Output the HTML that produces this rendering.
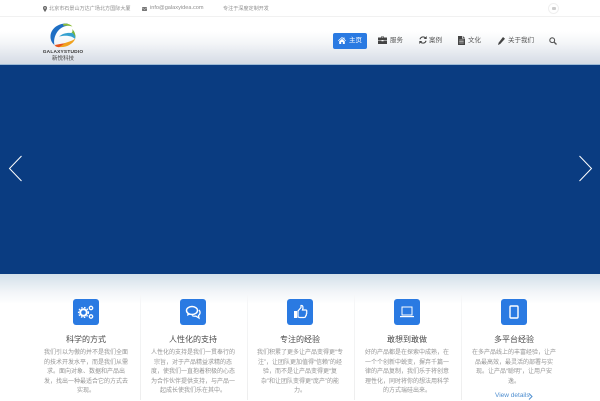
<!DOCTYPE html>
<html lang="zh-CN">
<head>
<meta charset="utf-8">
<title>Galaxy Studio</title>
<style>
*{box-sizing:border-box}
html,body{margin:0;padding:0}
body{width:600px;height:400px;overflow:hidden;background:#fff;position:relative;font-family:"Liberation Sans","Noto Sans CJK SC",sans-serif;color:#555}
.abs{position:absolute}
.top{left:0;top:0;width:600px;height:17px;background:#fff;border-bottom:1px solid #f1f1f1}
.tt{position:absolute;top:5px;font-size:5.100px;line-height:9px;color:#8f8f8f;white-space:nowrap}
.head{left:0;top:17px;width:600px;height:47px;background:linear-gradient(#fff 0,#fff 30%,#f4f6f8 55%,#d5dbe5 100%)}
.banner{left:0;top:64px;width:600px;height:210px;background:#0a3c81;border-top:1px solid #9dbad6}
.under{left:0;top:274px;width:600px;height:30px;background:linear-gradient(#d3e0ea,#f2f5f8 60%,#fff)}
.nav{position:absolute;top:35.500px;font-size:6.500px;line-height:10px;color:#555;white-space:nowrap}
.home{left:333px;top:33px;width:34px;height:16px;background:#2a7ae2;border-radius:2px}
.ic{top:299px;width:26px;height:26px;background:#2a7ae2;border-radius:3px;position:absolute}
.div{position:absolute;top:295px;width:1px;height:105px;background:linear-gradient(#f6f7f8,#eeeeee)}
.h{position:absolute;top:333.500px;width:107px;text-align:center;font-size:8px;line-height:12px;color:#4a4a4a;white-space:nowrap}
.p{position:absolute;top:349px;width:107px;text-align:center;font-size:6px;line-height:9.500px;color:#959595;white-space:nowrap}
</style>
</head>
<body>
<div class="abs top"></div>
<svg class="abs" style="left:43px;top:6px" width="4" height="6" viewBox="0 0 4 6"><path d="M2 0a2 2 0 0 0-2 2c0 1.400 2 4 2 4s2-2.600 2-4a2 2 0 0 0-2-2z" fill="#666"/><circle cx="2" cy="2" r=".7" fill="#fff"/></svg>
<div class="tt" style="left:49px">北京市石景山万达广场北方国际大厦</div>
<svg class="abs" style="left:142px;top:7px" width="5" height="4" viewBox="0 0 5 4"><rect width="5" height="4" rx=".6" fill="#777"/><path d="M0 .8l2.500 1.600L5 .8" stroke="#fff" stroke-width=".4" fill="none"/></svg>
<div class="tt" style="left:150px;font-size:5.600px;top:4px">info@galaxyidea.com</div>
<div class="tt" style="left:223px">专注于深度定制开发</div>
<div class="abs" style="left:548px;top:3px;width:11px;height:11px;border-radius:50%;border:1px solid #efefef;background:#fff"></div>
<div class="abs" style="left:552px;top:7px;width:4px;height:3px;background:#ccc;border-radius:1px"></div>

<div class="abs head"></div>
<svg class="abs" style="left:50px;top:23px" width="26" height="25" viewBox="0 0 26 25">
<path d="M17 .5C9 0 1 5 .5 13c-.2 4 1.500 7 4 9C3 16 6 8 12 4.500 15 3 17 2.500 20 2.500 19 1.500 18 1 17 .5z" fill="#1f6fc4"/>
<path d="M13 1c4-1 7 0 9.500 2.500-3-.8-6-1-9-.8z" fill="#8fbf3a"/>
<path d="M9 13.500C13 10 19 9 24 10.500c1.500 1 1.800 3 1 5.500-3-3.500-9.500-4-16-2.500z" fill="#35a0cf"/>
<path d="M22 6c2.500 2 3.800 5.500 3.300 9-.5-2.500-1.500-4.500-4-5.500 1.500-.5 1.500-2 .7-3.500z" fill="#78b53c"/>
<path d="M6 23.500c7 2 16-.5 19.500-8-2 1.500-4.500 2.500-7.500 3.500-4 1.500-8 2.500-12 4.500z" fill="#f0a21e"/>
<path d="M4.500 22.500c1 1 2.500 1.500 4.500 1.800l6-4c-4 .5-7.500 1-10.500 2.200z" fill="#e5531e"/>
</svg>
<div class="abs" style="left:40px;top:50px;width:46px;text-align:center;font-size:4.800px;line-height:5px;font-weight:bold;color:#333;letter-spacing:.2px;white-space:nowrap">GALAXYSTUDIO</div>
<div class="abs" style="left:40px;top:55px;width:46px;text-align:center;font-size:5.500px;line-height:8px;color:#444;white-space:nowrap">新悦科技</div>

<div class="abs home"></div>
<svg class="abs" style="left:338px;top:37px" width="8" height="7" viewBox="0 0 8 7"><path d="M4 0L0 3.500l.5.500L4 1l3.500 3 .5-.5L6.500 2.200V.5h-1v.9zM1.200 4.200V7h2V5h1.600v2h2V4.200L4 1.800z" fill="#fff"/></svg>
<div class="nav" style="left:349px;color:#fff">主页</div>
<svg class="abs" style="left:378px;top:36px" width="9" height="8" viewBox="0 0 9 8"><path d="M3 1.500V.5h3v1h3v2.500H0V1.500zM3.700 1.500h1.600V1H3.700zM0 4.500h3.500v.7h2v-.7H9V8H0z" fill="#444"/></svg>
<div class="nav" style="left:390px">服务</div>
<svg class="abs" style="left:419px;top:36px" width="8" height="8" viewBox="0 0 8 8"><path d="M1 3.300A3.100 3.100 0 0 1 6.300 1.900M7 4.700A3.100 3.100 0 0 1 1.700 6.100" stroke="#444" stroke-width="1.100" fill="none"/><path d="M7.700 0v3h-3zM.3 8V5h3z" fill="#444"/></svg>
<div class="nav" style="left:429px">案例</div>
<svg class="abs" style="left:458px;top:36px" width="7" height="9" viewBox="0 0 7 9"><path d="M0 0h4v2.500h3V9H0zM4.700 0L7 1.900H4.700z" fill="#444"/><path d="M1.200 4h4.500M1.200 5.500h4.500M1.200 7h4.500" stroke="#fff" stroke-width=".5"/></svg>
<div class="nav" style="left:468px">文化</div>
<svg class="abs" style="left:498px;top:37px" width="7" height="8" viewBox="0 0 7 8"><path d="M5 0l2 1.700L2.200 7 0 8l.6-2.300z" fill="#444"/></svg>
<div class="nav" style="left:508px">关于我们</div>
<svg class="abs" style="left:549px;top:37px" width="8" height="8" viewBox="0 0 8 8"><circle cx="3.200" cy="3.200" r="2.400" stroke="#555" stroke-width="1.100" fill="none"/><path d="M5 5l2.500 2.500" stroke="#555" stroke-width="1.300"/></svg>

<div class="abs banner"></div>
<svg class="abs" style="left:8px;top:155px" width="15" height="27" viewBox="0 0 15 27"><path d="M13.500 1L1.500 13.500 13.500 26" stroke="#fff" stroke-width="1" fill="none"/></svg>
<svg class="abs" style="left:578px;top:155px" width="15" height="27" viewBox="0 0 15 27"><path d="M1.500 1L13.500 13.500 1.500 26" stroke="#fff" stroke-width="1" fill="none"/></svg>
<div class="abs under"></div>

<div class="div" style="left:140px"></div>
<div class="div" style="left:247px"></div>
<div class="div" style="left:354px"></div>
<div class="div" style="left:461px"></div>

<div class="ic" style="left:73px"><svg width="26" height="26" viewBox="0 0 26 26"><circle cx="10.500" cy="13.500" r="3.300" fill="none" stroke="#fff" stroke-width="2"/><circle cx="10.500" cy="13.500" r="5" fill="none" stroke="#fff" stroke-width="1.200" stroke-dasharray="1.500 1.500"/><circle cx="18" cy="9" r="1.700" fill="none" stroke="#fff" stroke-width="1.300"/><circle cx="18" cy="17.500" r="1.700" fill="none" stroke="#fff" stroke-width="1.300"/></svg></div>
<div class="ic" style="left:180px"><svg width="26" height="26" viewBox="0 0 26 26"><ellipse cx="12" cy="11.500" rx="5.500" ry="4" fill="none" stroke="#fff" stroke-width="1.500"/><path d="M7.500 14l-.5 3 3-1.500z" fill="#fff"/><path d="M19 11c1.500 1.500 1.500 4-.5 5.500l.5 2.500-3-1.800c-1.500.2-3 0-4-.7" fill="none" stroke="#fff" stroke-width="1.300"/></svg></div>
<div class="ic" style="left:287px"><svg width="26" height="26" viewBox="0 0 26 26"><path d="M7 12h3v7H7z" fill="#fff"/><path d="M11 12l3-3.500V6.500c2-.5 2.500 2 1.500 4.500H19c1 0 1 1.500.5 2 .5.500.5 1.500-.2 2 .2.800 0 1.500-.6 1.800 0 1-.7 1.700-1.700 1.700H13c-1 0-1.500-.5-2-.5z" fill="none" stroke="#fff" stroke-width="1.200"/></svg></div>
<div class="ic" style="left:394px"><svg width="26" height="26" viewBox="0 0 26 26"><rect x="8" y="8" width="10" height="8" fill="none" stroke="#fff" stroke-width="1"/><rect x="6" y="17" width="14" height="1.200" fill="#fff"/></svg></div>
<div class="ic" style="left:501px"><svg width="26" height="26" viewBox="0 0 26 26"><rect x="9" y="7" width="8" height="12" rx="1" fill="none" stroke="#fff" stroke-width="1.400"/></svg></div>

<div class="h" style="left:32.500px">科学的方式</div>
<div class="h" style="left:139.500px">人性化的支持</div>
<div class="h" style="left:246.500px">专注的经验</div>
<div class="h" style="left:353.500px">敢想到敢做</div>
<div class="h" style="left:460.500px">多平台经验</div>

<div class="p" style="left:32.500px">我们引以为傲的并不是我们全面<br>的技术开发水平，而是我们从需<br>求。面向对象、数据和产品出<br>发，找出一种最适合它的方式去<br>实现。</div>
<div class="p" style="left:139.500px">人性化的支持是我们一贯奉行的<br>宗旨，对于产品精益求精的态<br>度，使我们一直抱着积极的心态<br>为合作伙伴提供支持，与产品一<br>起成长使我们乐在其中。</div>
<div class="p" style="left:246.500px">我们积累了更多让产品变得更“专<br>注”，让团队更加值得“信赖”的经<br>验，而不是让产品变得更“复<br>杂”和让团队变得更“庞产”的能<br>力。</div>
<div class="p" style="left:353.500px">好的产品都是在探索中成熟，在<br>一个个创新中蜕变，摒弃千篇一<br>律的产品复制，我们乐于将创意<br>理性化，同时将你的想法用科学<br>的方式瑞硅出来。</div>
<div class="p" style="left:460.500px">在多产品线上的丰富经验，让产<br>品最高效，最灵活的部署与实<br>现。让产品“聪明”，让用户安<br>逸。</div>
<div class="abs" style="left:495px;top:390.500px;font-size:6.500px;line-height:10px;color:#4f8fd0;white-space:nowrap">View details</div>
<svg class="abs" style="left:528px;top:392.500px" width="5" height="7" viewBox="0 0 5 7"><path d="M1 .5L4 3.500 1 6.500" stroke="#4f8fd0" stroke-width="1" fill="none"/></svg>
</body>
</html>
